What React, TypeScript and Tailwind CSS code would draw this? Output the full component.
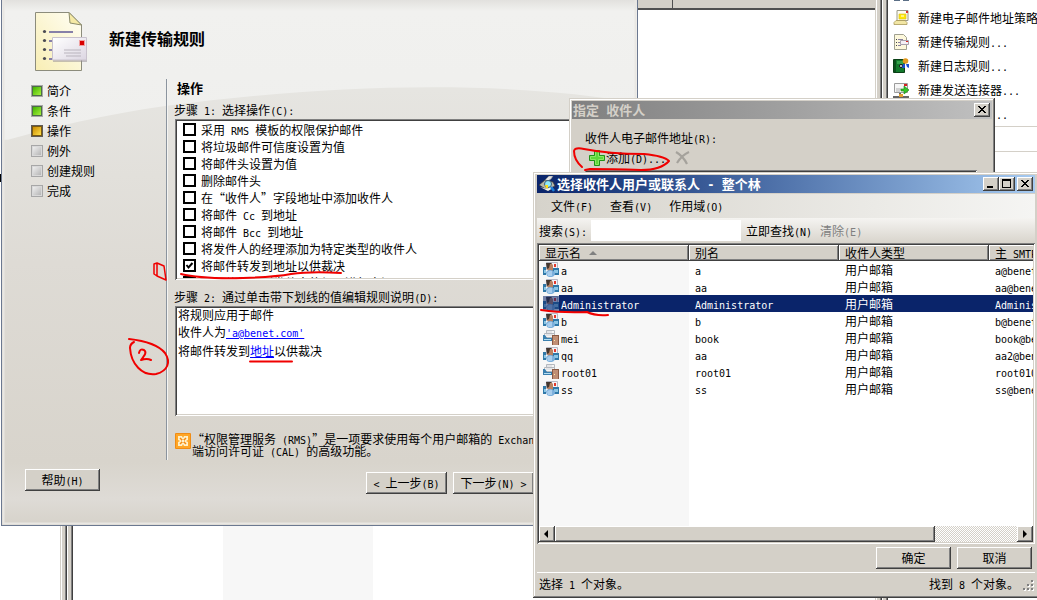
import React, { useState } from 'react';

// classic 3D edges
const raised = 'bg-[#d4d0c8] shadow-[inset_-1px_-1px_#404040,inset_1px_1px_#fff,inset_-2px_-2px_#808080]';
const sunken = 'bg-white p-[2px] shadow-[inset_1px_1px_#808080,inset_-1px_-1px_#fff,inset_2px_2px_#404040,inset_-2px_-2px_#d4d0c8]';

const ruleActions = [
  '采用 RMS 模板的权限保护邮件',
  '将垃圾邮件可信度设置为值',
  '将邮件头设置为值',
  '删除邮件头',
  '在“收件人”字段地址中添加收件人',
  '将邮件 Cc 到地址',
  '将邮件 Bcc 到地址',
  '将发件人的经理添加为特定类型的收件人',
  '将邮件转发到地址以供裁决',
  '将邮件转发到发件人的经理进行审阅',
];

const steps = [
  { label: '简介', state: 'done' },
  { label: '条件', state: 'done' },
  { label: '操作', state: 'current' },
  { label: '例外', state: 'todo' },
  { label: '创建规则', state: 'todo' },
  { label: '完成', state: 'todo' },
];

const recipients = [
  { name: 'a', alias: 'a', smtp: 'a@benet.com', icon: 'user' },
  { name: 'aa', alias: 'aa', smtp: 'aa@benet.com', icon: 'user' },
  { name: 'Administrator', alias: 'Administrator', smtp: 'Administrator@benet.com', icon: 'user' },
  { name: 'b', alias: 'b', smtp: 'b@benet.com', icon: 'user' },
  { name: 'mei', alias: 'book', smtp: 'book@benet.com', icon: 'room' },
  { name: 'qq', alias: 'aa', smtp: 'aa2@benet.com', icon: 'user' },
  { name: 'root01', alias: 'root01', smtp: 'root010@benet.com', icon: 'room' },
  { name: 'ss', alias: 'ss', smtp: 'ss@benet.com', icon: 'user' },
];

// Latin runs are half as wide as the Chinese characters around them
function Txt({ children, bold = false }: { children: string; bold?: boolean }) {
  return (
    <>
      {children.split(/([\x20-\x7e]+)/).map((part, i) =>
        i % 2 ? (
          <span key={i} className={`whitespace-pre font-['DejaVu_Sans_Mono',monospace] ${bold ? 'text-[12px]/[10px]' : 'text-[10px]/[8px]'}`}>{part}</span>
        ) : (
          part
        )
      )}
    </>
  );
}

function Splitter() {
  return (
    <div className="flex shrink-0">
      <div className="w-px bg-[#d4d0c8]" />
      <div className="w-px bg-white" />
      <div className="w-[3px] bg-[#d4d0c8]" />
      <div className="w-px bg-[#808080]" />
      <div className="w-px bg-[#404040]" />
      <div className="w-px bg-white" />
      <div className="w-[3px] bg-[#d4d0c8]" />
      <div className="w-px bg-[#808080]" />
      <div className="w-px bg-[#404040]" />
    </div>
  );
}

function Btn({ children, className = '' }: { children: string; className?: string }) {
  return (
    <button type="button" className={`h-[22px] text-center leading-[22px] whitespace-nowrap ${raised} ${className}`}>
      <Txt>{children}</Txt>
    </button>
  );
}

function CaptionButton({ kind }: { kind: 'min' | 'max' | 'close' }) {
  return (
    <button type="button" aria-label={kind} className={`h-[14px] w-4 ${raised}`}>
      <svg width="16" height="14" viewBox="0 0 16 14" shapeRendering="crispEdges">
        {kind === 'min' && <path d="M4 9h6v2H4z" />}
        {kind === 'max' && <path d="M3 2h9v9H3zM4 4v6h7V4z" fillRule="evenodd" />}
        {kind === 'close' && (
          <path d="M4 3h2v1h1v1h2V4h1V3h2v1h-1v1h-1v1H9v1h1v1h1v1h1v1h-2V9H9V8H7v1H6v1H4V9h1V8h1V7h1V6H6V5H5V4H4z" />
        )}
      </svg>
    </button>
  );
}

function StepIcon({ state }: { state: string }) {
  const id = `step-${state}`;
  const from = state === 'done' ? '#3fb200' : state === 'current' ? '#c98a00' : '#b5b5b5';
  const to = state === 'done' ? '#a6f03c' : state === 'current' ? '#ffe04a' : '#eeeeee';
  return (
    <svg width="12" height="12" viewBox="0 0 12 12">
      <defs>
        <linearGradient id={id} x1="0" y1="0" x2="1" y2="1">
          <stop offset="0" stopColor={state === 'todo' ? to : from} />
          <stop offset="1" stopColor={state === 'todo' ? from : to} />
        </linearGradient>
      </defs>
      <rect width="12" height="12" fill={state === 'current' ? '#5f5a55' : '#a7a7a7'} />
      <rect x="1" y="1" width="10" height="10" fill={state === 'done' ? '#4e6b4a' : state === 'current' ? '#7a5a10' : '#d9d9d9'} />
      <rect x="2" y="2" width="8" height="8" fill={`url(#${id})`} />
    </svg>
  );
}

function RuleLogo() {
  return (
    <svg width="53" height="60" viewBox="0 0 53 60">
      <defs>
        <linearGradient id="sheet" x1="1" y1="0" x2="0" y2="1">
          <stop offset="0" stopColor="#fffef5" />
          <stop offset="1" stopColor="#f8eeb4" />
        </linearGradient>
        <linearGradient id="letter" x1="0" y1="0" x2="1" y2="1">
          <stop offset="0" stopColor="#ffffff" />
          <stop offset="1" stopColor="#dcd6e2" />
        </linearGradient>
      </defs>
      <path d="M.5.5H34L46.500 13v45.500H.5z" fill="url(#sheet)" stroke="#8c8c7c" />
      <path d="M34 .5 46.500 13 35 11z" fill="#f6eaa6" stroke="#8c8c6c" />
      <g fill="#4a4a52">
        <circle cx="9.500" cy="19.500" r="1.600" />
        <circle cx="9.500" cy="28.500" r="1.600" />
        <circle cx="9.500" cy="37.500" r="1.600" />
        <circle cx="9.500" cy="46.500" r="1.600" />
      </g>
      <path d="M14 20h24M14 29h8M14 38h8M14 47h8" stroke="#8780a8" strokeWidth="2" />
      <path d="M18 26h34v24H18z" fill="#8f8a90" opacity=".5" />
      <path d="M17.500 25.500h34v22.500h-34z" fill="url(#letter)" stroke="#c9c2cd" />
      <path d="M29 38h17M29 41h17M31 44h15" stroke="#b9b4bd" />
      <path d="M44 28h6v6h-6z" fill="#f0a0a0" />
      <path d="M45 29h4v4h-4z" fill="#d80000" />
    </svg>
  );
}

function RmsIcon() {
  return (
    <svg width="16" height="16" viewBox="0 0 16 16" className="shrink-0">
      <rect width="16" height="16" rx="1" fill="#f08c14" />
      <rect x="1" y="1" width="14" height="14" fill="#ffa626" />
      <path d="M3 3h4l1 2 1-2h4v4l-2 1 2 1v4H9l-1-2-1 2H3V9l2-1-2-1z" fill="#fff0c8" />
      <path d="M5 5l6 6M11 5l-6 6" stroke="#f58a10" strokeWidth="1.500" />
      <path d="M7 7h2v2H7z" fill="#fff0c8" />
    </svg>
  );
}

function RecipientIcon({ kind, selected }: { kind: string; selected: boolean }) {
  if (kind === 'room') {
    return (
      <svg width="16" height="15" viewBox="0 0 16 15">
        <path d="M3.500.5h8v3h-8zM1.500 3.500h10v4h-10z" fill="#f6f6f6" stroke="#b4b8be" />
        <path d="M4 2h5M3 5h7" stroke="#d0d2d8" />
        <path d="M0 5h2l2 3h5v3H0z" fill="#3a7fae" />
        <path d="M1 9h7v1H1z" fill="#b4def2" />
        <path d="M9 5h7v10H9z" fill="#8a5a44" />
        <path d="M10 6h5v9h-5z" fill="#c08e74" />
        <path d="M11 10h1v1h-1z" fill="#ffe9a0" />
      </svg>
    );
  }
  return (
    <svg width="16" height="15" viewBox="0 0 16 15">
      <path d="M1 1h14v7H1z" fill="#f0f0f4" />
      <path d="M3.500.5h11v7h-11z" fill="#f2f2f6" stroke="#b6b8c4" />
      <path d="M11 2h2v3h-2z" fill="#e2382c" />
      <path d="M0 5h3v8H0zM9 6h7v7H9z" fill="#2f78a8" />
      <path d="M11 8h4v3h-4zM1 8h2v3H1z" fill="#8cc6e4" />
      <path d="M4 1h4l2 2v5l-2 2H6L4 7z" fill="#b98262" />
      <path d="M3 1h5l1 1H7L6 6 4 7z" fill="#43362e" />
      <path d="M3 11c0-2 2-3 4-3s5 1 5 4l-1 2-2 1H6l-2-1z" fill="#7db0dc" />
      <path d="M4 11c1-2 3-2 5-2v5H5z" fill="#a8cdec" />
      {selected && <path d="M0 0h16v15H0z" fill="#0a246a" opacity=".55" />}
    </svg>
  );
}

function SearchWindowIcon() {
  return (
    <svg width="17" height="16" viewBox="0 0 17 16">
      <path d="M5 5 10 0h4l-2 3-5 3z" fill="#e4e4e4" stroke="#8a8a8a" strokeWidth=".6" />
      <path d="M0 9 6 4l8 2 2 4-8 4z" fill="#b8b8a8" stroke="#333" strokeWidth=".7" />
      <path d="M1 11l8 4 5-3-2-1-4 2z" fill="#f4f4e4" />
      <circle cx="9" cy="8" r="3.500" fill="#8fe8f8" stroke="#3a5b78" />
      <path d="M6 9h3v3H7z" fill="#ffdc10" />
      <path d="m12 11 3 4" stroke="#1c7fd8" strokeWidth="2.500" />
    </svg>
  );
}

function TaskIcon({ kind }: { kind: string }) {
  return (
    <svg width="16" height="16" viewBox="0 0 16 16" className="shrink-0">
      {kind === 'policy' && (
        <>
          <path d="M4 .5h11v10H4z" fill="#fffdf0" stroke="#9a9a8a" />
          <path d="M6 4h7v5H6z" fill="#ffe800" stroke="#d8c030" strokeWidth=".7" />
          <path d="M8 6h3" stroke="#fff" />
          <path d="M13 1h2v2h-2z" fill="#d83030" />
          <path d="M3 10.500h9l2 2v2H1v-2z" fill="#f2e6a4" stroke="#a89858" strokeWidth=".8" />
        </>
      )}
      {kind === 'rule' && (
        <>
          <path d="M1.500.5h9l3 3v12h-12z" fill="#fdf8dc" stroke="#a0a090" />
          <path d="M3 5h1v1H3zM3 8h1v1H3zM3 11h1v1H3z" fill="#444" />
          <path d="M5 5.500h5M5 8.500h3M5 11.500h3" stroke="#8880a0" />
          <path d="M7.500 6.500h8v4h-8z" fill="#f4f0f6" stroke="#a8a0ac" />
          <path d="M13 7h2v1h-2z" fill="#d82020" />
        </>
      )}
      {kind === 'journal' && (
        <>
          <path d="M.5 1.500h11v13H.5z" fill="#137a2c" stroke="#0a3f16" />
          <path d="M1 2h2v12H1z" fill="#0b4f1c" />
          <path d="M4 3h6v3H4z" fill="#36a34c" />
          <circle cx="8" cy="8" r="1.500" fill="#fff" stroke="#111" />
          <circle cx="12.500" cy="3" r="2.800" fill="#e29a20" />
          <path d="M10 6h2v4H9zM13 6h3v4l-2-1z" fill="#1c50d0" />
        </>
      )}
      {kind === 'send' && (
        <>
          <path d="M1.500 1.500h13v9h-13z" fill="#f6f6f6" stroke="#9c9c9c" />
          <path d="M3 7h5M3 9h4" stroke="#b0b0b0" />
          <path d="M11 2h3v2h-3z" fill="#d82020" />
          <path d="M8 7h3V4l5 4-5 4V9H8z" fill="#34c428" stroke="#1a8014" strokeWidth=".6" />
          <path d="M0 15h16M7 11v3" stroke="#666" strokeWidth="2" />
          <path d="M6 12h4v3H6z" fill="#e0a030" />
        </>
      )}
    </svg>
  );
}

function ConsoleBackdrop() {
  const tasks = [
    { label: '新建电子邮件地址策略', kind: 'policy' },
    { label: '新建传输规则...', kind: 'rule' },
    { label: '新建日志规则...', kind: 'journal' },
    { label: '新建发送连接器...', kind: 'send' },
    { label: '查看规则列表...', kind: 'none' },
  ];
  return (
    <div className="flex h-full bg-white">
      <div className="w-[60px] shrink-0 pt-[174px]">
        <div className="h-2 w-px bg-black" />
      </div>
      <Splitter />
      <div className="grid min-w-0 flex-1 grid-cols-[150px_150px_150px_150px_1fr] grid-rows-[10px_1fr]">
        {[0, 1, 2, 3, 4].map(i => (
          <div key={i} className={`border-b-2 border-[#505050] bg-[#d4d0c8] ${i < 4 ? 'border-r' : ''}`} />
        ))}
        <div />
        <div className="bg-[#f7f7f7]" />
      </div>
      <Splitter />
      <aside className="w-[149px] shrink-0 overflow-hidden">
        <div className="flex h-[6px] gap-[3px] pl-[6px]">
          <div className="h-px w-[6px] bg-[#5b6f86]" />
          <div className="h-px w-[6px] bg-[#5b6f86]" />
        </div>
        <ul>
          {tasks.map(t => (
            <li key={t.label} className="flex h-6 items-center gap-[9px] pl-[5px] whitespace-nowrap">
              <TaskIcon kind={t.kind} />
              <a href="#" className="text-black"><Txt>{t.label}</Txt></a>
            </li>
          ))}
        </ul>
        <div className="h-[26px] border-y border-[#d4d0c8]" />
      </aside>
    </div>
  );
}

function WizardWindow() {
  const [checked, setChecked] = useState<number[]>([8]);

  const toggle = (i: number) => {
    setChecked(checked.includes(i) ? checked.filter(c => c !== i) : [...checked, i]);
  };

  return (
    <section className="absolute top-0 left-px w-[637px] overflow-hidden border border-t-0 border-[#6b7890] bg-[#dad7d0]">
      {/* glossy curve behind the content */}
      <svg className="absolute inset-0 h-full w-full" viewBox="0 0 635 526" preserveAspectRatio="none">
        <defs>
          <linearGradient id="gloss" x1="0" y1="0" x2="0" y2="1">
            <stop offset="0" stopColor="#e2e1de" />
            <stop offset=".08" stopColor="#f1f1ef" />
            <stop offset="1" stopColor="#efefed" />
          </linearGradient>
          <linearGradient id="shade" x1="0" y1="0" x2="0" y2="1">
            <stop offset=".17" stopColor="#e6e5e1" />
            <stop offset=".5" stopColor="#dedbd5" />
            <stop offset=".88" stopColor="#d8d4cc" />
            <stop offset=".95" stopColor="#dedbd6" />
            <stop offset="1" stopColor="#d6d2ca" />
          </linearGradient>
        </defs>
        <path d="M0 0h635v526H0z" fill="url(#shade)" />
        <path d="M0 0h635v103C500 80 330 84 165 106 100 115 50 128 6 140H0z" fill="url(#gloss)" />
        <path d="M1.500 0v524.500h632V0" fill="none" stroke="#e9e7e3" strokeWidth="2" />
      </svg>

      <div className="relative">
        <header className="flex h-[79px] gap-[21px] pt-3 pl-[33px]">
          <RuleLogo />
          <h1 className="pt-[14px] text-[16px] leading-6 font-bold">新建传输规则</h1>
        </header>

        <div className="flex">
          <ol className="w-[164px] shrink-0 pt-[2px] pl-[29px]">
            {steps.map(s => (
              <li key={s.label} className="flex h-5 items-center gap-1">
                <StepIcon state={s.state} />
                {s.label}
              </li>
            ))}
          </ol>

          <div className="min-w-0 flex-1 border-l border-[#8b949e] pr-4 pb-[3px] pl-2 shadow-[inset_1px_0_#f4f4f2]">
            <h2 className="pl-[2px] text-[13px] leading-[18px] font-bold">操作</h2>
            <p className="mt-[5px] -ml-px leading-4"><Txt>步骤 1: 选择操作(C):</Txt></p>
            <div className={`mt-px h-[161px] ${sunken}`}>
              <ul className="h-full overflow-hidden">
                {ruleActions.map((a, i) => (
                  <li key={a}>
                    <label className="relative flex h-[17px] items-center gap-[5px] pl-[6px] whitespace-nowrap">
                      <input
                        type="checkbox"
                        checked={checked.includes(i)}
                        onChange={() => toggle(i)}
                        className="peer h-[13px] w-[13px] shrink-0 appearance-none border-2 border-black bg-white"
                      />
                      <svg width="13" height="13" viewBox="0 0 13 13" className="pointer-events-none invisible absolute left-[6px] peer-checked:visible">
                        <path d="m3.500 6 2 2.500 4-4.500" fill="none" stroke="#000" strokeWidth="2" />
                      </svg>
                      <span><Txt>{a}</Txt></span>
                    </label>
                  </li>
                ))}
              </ul>
            </div>

            <p className="mt-[9px] -ml-px leading-4"><Txt>步骤 2: 通过单击带下划线的值编辑规则说明(D):</Txt></p>
            <div className={`mt-px h-[110px] ${sunken}`}>
              <div className="pl-px leading-[17px]">
                <p className="-mt-[2px]">将规则应用于邮件</p>
                <p>收件人为<a href="#" className="text-[#0000ff] underline"><Txt>'a@benet.com'</Txt></a></p>
                <p className="mt-[2px]">将邮件转发到<a href="#" className="text-[#0000ff] underline">地址</a>以供裁决</p>
              </div>
            </div>

            <div className="mt-[17px] flex gap-px leading-3 whitespace-nowrap">
              <RmsIcon />
              <p>
                <Txt>“权限管理服务 (RMS)”是一项要求使用每个用户邮箱的 Exchange 客户</Txt>
                <br />
                <Txt>端访问许可证 (CAL) 的高级功能。</Txt>
              </p>
            </div>
          </div>
        </div>

        <footer className="flex items-start pt-[9px] pb-[31px] pl-[23px]">
          <Btn className="w-[75px]">帮助(H)</Btn>
          <div className="mt-[3px] ml-[266px] flex gap-[6px]">
            <Btn className="w-[81px]">{'< 上一步(B)'}</Btn>
            <Btn className="w-[81px]">{'下一步(N) >'}</Btn>
          </div>
        </footer>
      </div>
    </section>
  );
}

function SpecifyRecipientWindow() {
  return (
    <section className="absolute top-[98px] left-[569px] w-[426px] bg-[#d4d0c8] p-[3px] shadow-[inset_-1px_-1px_#404040,inset_1px_1px_#d4d0c8,inset_-2px_-2px_#808080,inset_2px_2px_#fff]">
      <header className="flex h-[18px] items-center justify-between bg-linear-to-r from-[#808080] to-[#c0c0c0] pr-[2px] pl-px">
        <h2 className="text-[13px] font-bold text-[#d4d0c8]"><Txt bold>指定 收件人</Txt></h2>
        <CaptionButton kind="close" />
      </header>
      <div className="px-[13px] pt-[11px] pb-8">
        <p className="leading-4"><Txt>收件人电子邮件地址(R):</Txt></p>
        <div className="flex h-6 items-center gap-[9px] pl-1">
          <button type="button" className="flex items-center gap-px">
            <svg width="16" height="16" viewBox="0 0 16 16">
              <path d="M5.500.5h5v5h5v5h-5v5h-5v-5h-5v-5h5z" fill="#38c020" stroke="#1f9418" />
              <path d="M6.500 1.500h3v5h5v3h-5v5h-3v-5h-5v-3h5z" fill="#5ed83a" stroke="#8cea64" />
            </svg>
            <span><Txt>添加(D)...</Txt></span>
          </button>
          <button type="button" aria-label="删除" disabled>
            <svg width="16" height="14" viewBox="0 0 16 14">
              <path d="M1 1q7 4 11 12M14 1Q7 4 2 12" fill="none" stroke="#a5a29c" strokeWidth="2.200" />
            </svg>
          </button>
        </div>
        <div className={`mr-[2px] h-10 ${sunken}`} />
      </div>
    </section>
  );
}

function SelectRecipientWindow() {
  const [selected, setSelected] = useState('Administrator');

  return (
    <section className="absolute top-[172px] -right-[2px] left-[533px] bg-[#d4d0c8] p-1 pt-[3px] shadow-[inset_-1px_-1px_#404040,inset_1px_1px_#d4d0c8,inset_-2px_-2px_#808080,inset_2px_2px_#fff]">
      <header className="flex h-[18px] items-center bg-linear-to-r from-[#0a246a] to-[#a6caf0] pr-[2px] pl-[2px] text-white">
        <SearchWindowIcon />
        <h2 className="flex-1 pl-px text-[13px] font-bold whitespace-nowrap"><Txt bold>选择收件人用户或联系人 - 整个林</Txt></h2>
        <div className="flex">
          <CaptionButton kind="min" />
          <CaptionButton kind="max" />
          <div className="w-[2px]" />
          <CaptionButton kind="close" />
        </div>
      </header>

      <nav className="mt-px flex h-6 items-center gap-[17px] bg-linear-to-r from-[#d6d3cb] to-[#f5f5f3] pl-[14px]">
        <button type="button"><Txt>文件(F)</Txt></button>
        <button type="button"><Txt>查看(V)</Txt></button>
        <button type="button"><Txt>作用域(O)</Txt></button>
      </nav>

      <form className="flex h-[25px] items-center bg-linear-to-b from-[#f5f4f1] to-[#d8d4cc] pl-[2px] whitespace-nowrap" onSubmit={e => e.preventDefault()}>
        <label htmlFor="search" className="w-[52px]"><Txt>搜索(S):</Txt></label>
        <input id="search" type="text" className="h-[21px] w-[150px] bg-white px-1 outline-none" />
        <button type="submit" className="ml-[5px]"><Txt>立即查找(N)</Txt></button>
        <button type="button" disabled className="ml-2 text-[#808080]"><Txt>清除(E)</Txt></button>
      </form>

      <div className={sunken}>
        <div className="h-[281px] overflow-hidden bg-[linear-gradient(90deg,#f7f7f7_150px,#fff_150px)]">
          <table className="w-[600px] table-fixed border-collapse text-left">
            <thead>
              <tr>
                {['显示名', '别名', '收件人类型', '主 SMTP 地址'].map((h, i) => (
                  <th key={h} className={`h-4 p-0 pl-[6px] leading-4 font-normal whitespace-nowrap ${raised}`}>
                    <div className="flex h-4 items-center gap-2">
                      <span><Txt>{h}</Txt></span>
                      {i === 0 && (
                        <svg width="8" height="4" viewBox="0 0 8 4">
                          <path d="M4 0l4 4H0z" fill="#808080" />
                        </svg>
                      )}
                    </div>
                  </th>
                ))}
              </tr>
            </thead>
            <tbody>
              {recipients.map(r => {
                const on = selected === r.name;
                return (
                  <tr key={r.name} onClick={() => setSelected(r.name)} className={`leading-[17px] ${on ? 'bg-[#0a246a] text-white' : ''}`}>
                    <td className="h-[17px] p-0">
                      <div className="flex h-[17px] items-center">
                        <div className="flex h-[17px] items-center bg-[#f7f7f7] pl-1">
                          <RecipientIcon kind={r.icon} selected={on} />
                        </div>
                        <span className="pl-[2px]"><Txt>{r.name}</Txt></span>
                      </div>
                    </td>
                    <td className="p-0 pl-[6px]"><Txt>{r.alias}</Txt></td>
                    <td className="p-0 pl-[6px]">用户邮箱</td>
                    <td className="p-0 pl-[6px]"><Txt>{r.smtp}</Txt></td>
                  </tr>
                );
              })}
            </tbody>
          </table>
        </div>
        <div className="flex h-4 bg-[repeating-conic-gradient(#fff_0_25%,#d4d0c8_0_50%)] bg-[length:2px_2px]">
          <button type="button" aria-label="向左滚动" className={`w-4 ${raised}`}>
            <svg width="16" height="16" viewBox="0 0 16 16"><path d="M9 4v8L5 8z" /></svg>
          </button>
          <div className={`w-[380px] ${raised}`} />
          <button type="button" aria-label="向右滚动" className={`ml-auto w-4 ${raised}`}>
            <svg width="16" height="16" viewBox="0 0 16 16"><path d="M6 4v8l4-4z" /></svg>
          </button>
        </div>
      </div>

      <div className="flex justify-end gap-[6px] pt-[3px] pr-[3px] pb-[3px]">
        <Btn className="w-[75px]">确定</Btn>
        <Btn className="w-[75px]">取消</Btn>
      </div>

      <footer className="flex h-[22px] items-center border-t border-white pl-[2px]">
        <span className="flex-1"><Txt>选择 1 个对象。</Txt></span>
        <span><Txt>找到 8 个对象。</Txt></span>
        <svg width="16" height="14" viewBox="0 0 16 14" className="mt-1">
          <path d="M12 1h2v2h-2zM12 5h2v2h-2zM12 9h2v2h-2zM8 5h2v2H8zM8 9h2v2H8zM4 9h2v2H4z" fill="#808080" />
          <path d="M14 2h1v2h-2V3h1zM14 6h1v2h-2V7h1zM14 10h1v2h-2v-1h1zM10 6h1v2H9V7h1zM10 10h1v2H9v-1h1zM6 10h1v2H5v-1h1z" fill="#fff" />
        </svg>
      </footer>
    </section>
  );
}

// hand-drawn red pen marks
function PenMarks() {
  return (
    <svg width="1037" height="600" viewBox="0 0 1037 600" className="pointer-events-none absolute top-0 left-0">
      <g fill="none" stroke="#f00000" strokeWidth="2" strokeLinecap="round" strokeLinejoin="round">
        <path d="M181 274q20 5 62 4 32-1 48-4 20-3 50-1" />
        <path d="M154 264l3-1v13l-3-2zM157 263l7 3 2 14-9-4" strokeWidth="1.500" />
        <path d="M250 361.500h42" />
        <path d="M129 339q27 3 36 14c6 9 3 18-9 21-14 2-25-10-26-26 0-4 2-5 4-6" />
        <path d="M139 353q1-5 5-3c3 2 1 5-3 10q6-2 10 0" />
        <path d="M582 167q-8-7-8-16 1-4 10-2 25 5 60 5 20 2 25 7-8 9-28 9-30-1-51-1l-5 1" />
        <path d="M541 310q20 3 46 2 8 4 21 3" />
      </g>
    </svg>
  );
}

export default function App() {
  return (
    <main className="relative h-screen min-h-[600px] overflow-hidden font-['Noto_Sans_CJK_SC',sans-serif] text-[12px] leading-4 text-black">
      <ConsoleBackdrop />
      <WizardWindow />
      <SpecifyRecipientWindow />
      <SelectRecipientWindow />
      <PenMarks />
    </main>
  );
}
